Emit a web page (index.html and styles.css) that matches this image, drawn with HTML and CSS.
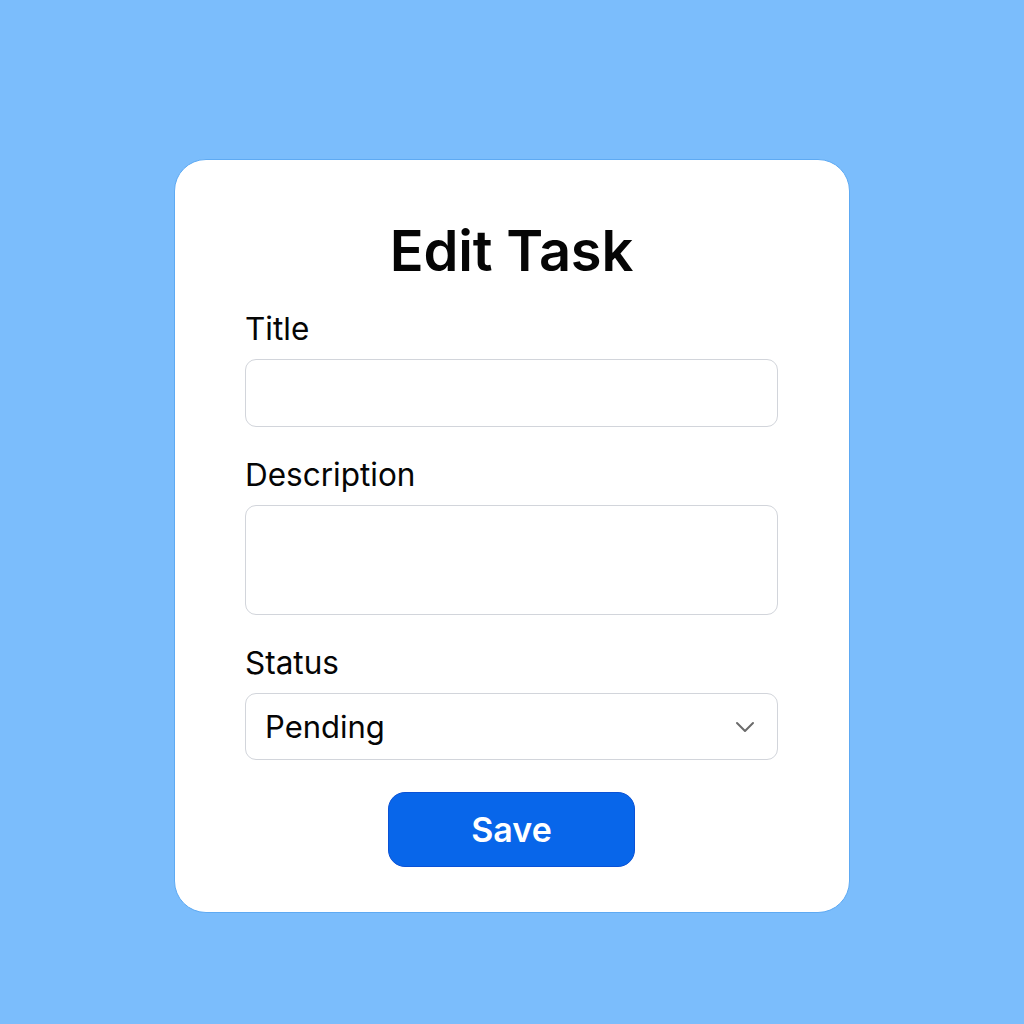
FILE: index.html
```html
<!DOCTYPE html>
<html>
<head>
<meta charset="utf-8">
<link rel="stylesheet" href="styles.css">
</head>
<body>
<main class="page">
  <form class="card">
    <h1 class="heading">Edit Task</h1>
    <label class="label">Title</label>
    <div class="input"></div>
    <label class="label label-gap">Description</label>
    <div class="input textarea"></div>
    <label class="label label-gap">Status</label>
    <div class="input select">
      <span class="select-value">Pending</span>
      <svg class="chevron" width="20" height="12" viewBox="0 0 20 12"><path d="M2 2 L10 10 L18 2" fill="none" stroke="#6b6b6b" stroke-width="2" stroke-linecap="round" stroke-linejoin="round"/></svg>
    </div>
    <div class="actions"><button type="button" class="save">Save</button></div>
  </form>
</main>
</body>
</html>
```
FILE: styles.css
```css
* { box-sizing: border-box; }
html, body { margin: 0; padding: 0; }
body {
  background: #7bbdfc;
  font-family: Inter, "Noto Sans", sans-serif;
  color: #050505;
}
.page {
  width: 1024px;
  height: 1024px;
  display: flex;
  justify-content: center;
  align-items: flex-start;
  padding-top: 159px;
}
.card {
  width: 676px;
  background: #ffffff;
  border: 1px solid #5eaaf3;
  border-radius: 32px;
  padding: 57px 71px 45px 70px;
  display: flex;
  flex-direction: column;
}
.heading {
  margin: 0 0 27px 0;
  font-size: 56px;
  line-height: 68px;
  font-weight: 600;
  text-align: center;
  letter-spacing: -0.2px;
}
.label {
  display: block;
  font-size: 31.5px;
  line-height: 34px;
  font-weight: 400;
  margin-bottom: 13px;
}
.label-gap { margin-top: 31px; }
.input {
  height: 68px;
  border: 1.5px solid #d2d5db;
  border-radius: 11px;
  background: #fff;
}
.textarea { height: 110px; }
.select {
  height: 67px;
  display: flex;
  align-items: center;
  justify-content: space-between;
  padding: 0 22px 0 19px;
}
.select-value {
  font-size: 31px;
  line-height: 34px;
}
.chevron { display: block; }
.actions {
  display: flex;
  justify-content: center;
  margin-top: 32px;
}
.save {
  width: 247px;
  height: 75px;
  background: #0866ea;
  border: 1px solid #0a52d6;
  border-radius: 17px;
  color: #ffffff;
  font-family: Inter, "Noto Sans", sans-serif;
  font-size: 34px;
  font-weight: 600;
  padding: 0;
}
```
